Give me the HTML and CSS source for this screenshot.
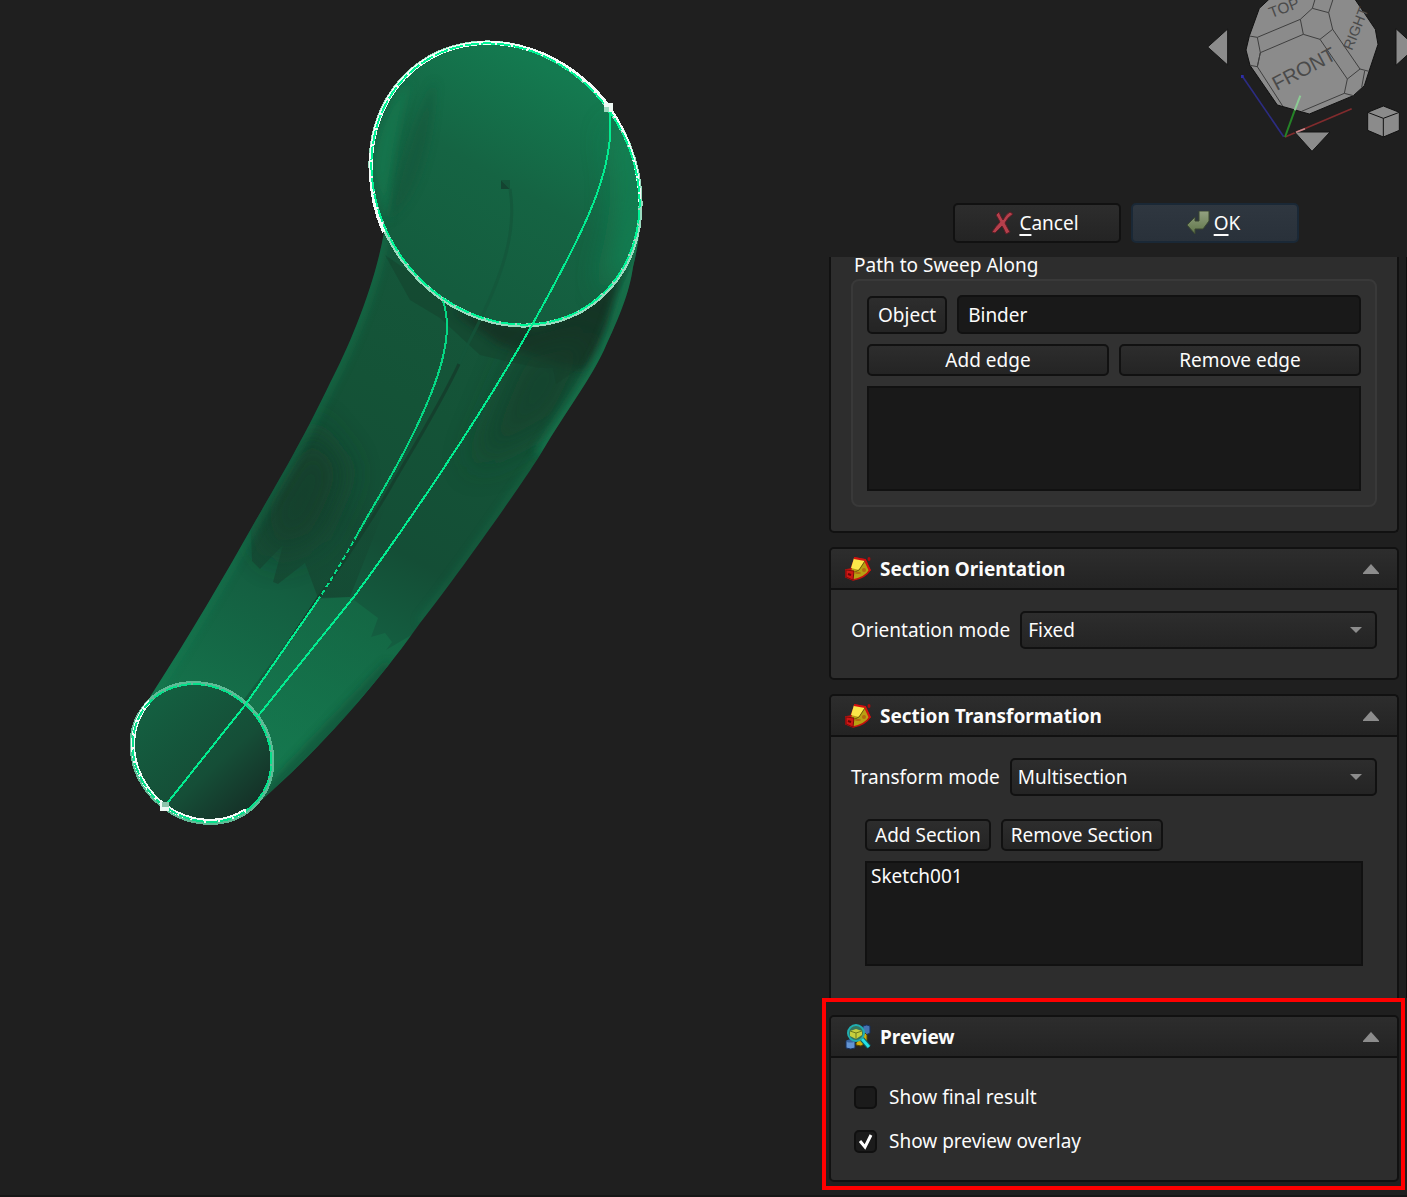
FILE: index.html
```html
<!DOCTYPE html>
<html lang="en">
<head>
    <meta charset="UTF-8">
    <meta name="viewport" content="width=device-width, initial-scale=1.0">
    <title>Sweep</title>
    <link rel="stylesheet" href="styles.css">
</head>
<body>
    <main class="workspace">
        <section class="viewport">
            <svg class="model" width="822" height="860" viewBox="0 0 822 860" role="img" aria-label="Swept pipe">
                <defs>
                    <clipPath id="tube-clip">
                        <path d="M384 232C375 285 350 345 330 383C305 435 285 470 256 520C225 575 190 635 150 697L165 760L258 803C320 750 380 680 420 623C445 592 515 495 540 455C570 405 590 380 604 350C620 315 629 294 633 267Q641 235 641 205Q560 120 384 232Z"/>
                    </clipPath>
                    <clipPath id="big-clip">
                        <ellipse cx="505.5" cy="184" rx="148" ry="128" transform="rotate(54.5 505.5 184)"/>
                    </clipPath>
                    <clipPath id="small-clip">
                        <ellipse cx="202" cy="753" rx="74" ry="66" transform="rotate(43.3 202 753)"/>
                    </clipPath>
                    <linearGradient id="tube" gradientUnits="userSpaceOnUse" x1="500" y1="260" x2="240" y2="750">
                        <stop offset="0" stop-color="#15573b"/>
                        <stop offset=".3" stop-color="#145337"/>
                        <stop offset=".55" stop-color="#144e36"/>
                        <stop offset=".72" stop-color="#145f41"/>
                        <stop offset="1" stop-color="#15744c"/>
                    </linearGradient>
                    <linearGradient id="mouth" gradientUnits="userSpaceOnUse" x1="570" y1="80" x2="450" y2="290">
                        <stop offset="0" stop-color="#147a50"/>
                        <stop offset=".5" stop-color="#156443"/>
                        <stop offset="1" stop-color="#145c3e"/>
                    </linearGradient>
                    <linearGradient id="end" gradientUnits="userSpaceOnUse" x1="150" y1="710" x2="245" y2="815">
                        <stop offset="0" stop-color="#145e40"/>
                        <stop offset=".6" stop-color="#154e37"/>
                        <stop offset="1" stop-color="#153027"/>
                    </linearGradient>
                    <linearGradient id="facets" gradientUnits="userSpaceOnUse" x1="290" y1="580" x2="330" y2="480">
                        <stop offset="0" stop-color="#15402d"/>
                        <stop offset="1" stop-color="#15402d" stop-opacity="0"/>
                    </linearGradient>
                    <linearGradient id="lit" gradientUnits="userSpaceOnUse" x1="360" y1="610" x2="300" y2="740">
                        <stop offset="0" stop-color="#147048"/>
                        <stop offset="1" stop-color="#15794f"/>
                    </linearGradient>
                    <filter id="soft" x="-50%" y="-50%" width="200%" height="200%">
                        <feGaussianBlur stdDeviation="16"/>
                    </filter>
                    <filter id="edge" x="-50%" y="-50%" width="200%" height="200%">
                        <feGaussianBlur stdDeviation="5"/>
                    </filter>
                </defs>

                <!-- outer skin of the sweep -->
                <g clip-path="url(#tube-clip)">
                    <path d="M100 100H700V850H100Z" fill="url(#tube)"/>
                    <path d="M450 310L540 328L620 280L610 330L585 370L560 365L500 345Z" fill="#152f23" filter="url(#edge)"/>
                    <path d="M520 350L600 330L560 420L470 470Z" fill="#153e2b" opacity=".7" filter="url(#soft)"/>
                    <path d="M385 255L410 300L440 318L480 355L510 362L540 368L553 368L556 384L582 366L640 250L540 320L450 300Z" fill="#153e2b" opacity=".45"/>
                    <path d="M256 510L310 420L350 470L320 540L270 560Z" fill="#153e2b" opacity=".8" filter="url(#soft)"/>
                    <path d="M251 536L252 561L260 569L283 545L273 582L278 584L305 563L318 598L350 597L400 470L310 420L250 520Z" fill="url(#facets)" opacity=".6"/>
                    <path d="M318 599L350 597L378 618L371 637L385 633L392 642L386 650L420 630L380 680L330 730L250 810L250 700Z" fill="url(#lit)" opacity=".6"/>
                    <path d="M384 232C375 285 350 345 330 383C305 435 285 470 256 520C225 575 190 635 150 697" fill="none" stroke="#178457" stroke-width="8" opacity=".5" filter="url(#edge)"/>
                    <path d="M641 225L633 267L604 350C590 380 570 405 540 455" fill="none" stroke="#168256" stroke-width="12" opacity=".7" filter="url(#edge)"/>
                    <path d="M540 455C515 495 445 592 420 623" fill="none" stroke="#168256" stroke-width="6" opacity=".4" filter="url(#edge)"/>
                    <path d="M390 665L290 770L262 800" fill="none" stroke="#144b34" stroke-width="9" opacity=".8" filter="url(#edge)"/>
                </g>
                <path d="M459 364C440 405 410 453 390 488S330 582 318 598L290 640" fill="none" stroke="#14402d" stroke-width="3"/>
                <path d="M290 640L244 702" fill="none" stroke="#145a3d" stroke-width="3"/>

                <!-- open end with the larger profile -->
                <g clip-path="url(#big-clip)">
                    <path d="M360 30H650V335H360Z" fill="url(#mouth)"/>
                    <path d="M640 130L650 270L600 290Q635 200 610 130Z" fill="#148a59" opacity=".8" filter="url(#soft)"/>
                    <path d="M410 80Q375 120 372 170L387 225Q392 150 410 80Z" fill="#158052" opacity=".6" filter="url(#edge)"/>
                    <path d="M435 80Q407 135 388 220Q430 190 435 80Z" fill="#14543a" opacity=".5" filter="url(#edge)"/>
                </g>
                <path d="M501 180L510 189L501 189Z" fill="#144431"/>
                <path d="M501 180H510V189Z" fill="#14553a"/>
                <path d="M510 189C517 230 504 275 470 340L459 364" fill="none" stroke="#14553b" stroke-width="3" opacity=".7"/>

                <!-- closed end with the smaller profile -->
                <g clip-path="url(#small-clip)">
                    <path d="M120 670H290V830H120Z" fill="url(#end)"/>
                </g>

                <g fill="none" shape-rendering="crispEdges">
                    <ellipse cx="505.5" cy="184" rx="148" ry="128" transform="rotate(54.5 505.5 184)" stroke="#9adbbf" stroke-width="4"/>
                    <path d="M609 107A148 128 54.5 0 0 487 43A148 128 54.5 0 0 371 165A148 128 54.5 0 0 384 232" stroke="#f4fbf8" stroke-width="4"/>
                    <path d="M609 107Q638 148 640 202" stroke="#f4fbf8" stroke-width="3"/>
                    <ellipse cx="505.5" cy="184" rx="147" ry="127" transform="rotate(54.5 505.5 184)" stroke="#00f596" stroke-width="2" stroke-dasharray="14 2"/>
                    <ellipse cx="202" cy="753" rx="74" ry="66" transform="rotate(43.3 202 753)" stroke="#5fbb96" stroke-width="4"/>
                    <path d="M150 701A74 66 43.3 0 0 165 806A74 66 43.3 0 0 246 810" stroke="#f4fbf8" stroke-width="4"/>
                    <ellipse cx="202" cy="753" rx="73" ry="65" transform="rotate(43.3 202 753)" stroke="#06e08b" stroke-width="2" stroke-dasharray="12 2"/>
                    <path d="M609 109C618 165 584 232 532 325S400 535 353 598L258 716" stroke="#02ec90" stroke-width="2"/>
                    <path d="M443 301C455 335 438 382 415 430S372 507 357 535" stroke="#05d884" stroke-width="2"/>
                    <path d="M357 535Q340 566 318 600" stroke="#05d884" stroke-width="2" stroke-dasharray="5 3"/>
                    <path d="M318 600L246 704L165 806" stroke="#02ec90" stroke-width="2"/>
                </g>
                <path d="M604 103H613V112H604Z" fill="#eef8f4"/>
                <path d="M604 107H609V112H604Z" fill="#9fd9c0"/>
                <path d="M160 802H169V811H160Z" fill="#eef8f4"/>
                <path d="M162 802H169V807H162Z" fill="#8fc4ac"/>
            </svg>
        </section>

        <aside class="task-panel">
            <div class="navigation">
                <svg class="nav-cube" viewBox="0 0 651 495" role="img" aria-label="Navigation cube">
                    <g fill="#8b8b8b" stroke="#151515" stroke-width="3">
                        <path d="M53 141L113 87V195Z"/>
                        <path d="M618 86L678 141L618 196Z"/>
                    </g>
                    <path d="M240 -5L208 25L178 108L168 150L180 196L262 315L358 342L490 287L523 257L537 214L564 133L556 88L493 -5Z" fill="#8b8b8b" stroke="#111" stroke-width="3"/>
                    <g fill="none" stroke="#3f3f3f" stroke-width="3">
                        <path d="M178 108L202 112L331 58L367 25L376 -5M202 112L211 158L202 200L180 196M211 158L340 103L331 58M340 103L390 118L428 88L416 38L367 25M416 38L430 -5M428 88L510 207L537 214M390 118L472 237L510 207M472 237L463 280L490 287M463 280L335 334M202 200L278 318M211 158L202 200M524 213L515 262"/>
                    </g>
                    <g class="cube-text">
                        <text x="260" y="273" font-size="60" transform="rotate(-28 260 273)">FRONT</text>
                        <text x="244" y="55" font-size="46" transform="rotate(-21 244 55)">TOP</text>
                        <text x="486" y="153" font-size="43" transform="rotate(-68 486 153)">RIGHT</text>
                    </g>
                    <g fill="none" stroke-width="5">
                        <path d="M157 229L281 410" stroke="#2c2c82"/>
                        <path d="M285 411L485 326" stroke="#812b2d"/>
                    </g>
                    <path d="M153 225H161V234H153Z" fill="#2e2ea8"/>
                    <path d="M314 396H420L366 454Z" fill="#8b8b8b" stroke="#151515" stroke-width="3"/>
                    <path d="M318 397L345 386" stroke="#c98a8c" stroke-width="5"/>
                    <path d="M285 411L314 331" stroke="#258327" stroke-width="6"/>
                    <path d="M314 331L331 287" stroke="#8ccb94" stroke-width="6"/>
                    <path d="M533 337L580 318L628 337V391L580 411L533 391Z" fill="#8b8b8b" stroke="#111" stroke-width="3"/>
                    <path d="M533 337L580 355L628 337M580 355V411" fill="none" stroke="#111" stroke-width="3"/>
                </svg>
            </div>

            <div class="dialog-buttons">
                <button type="button" class="btn dialog-btn">
                    <svg class="dialog-icon" viewBox="0 0 24 24" aria-hidden="true">
                        <path d="M8 1Q10 6 12 9Q15 3 19 1L22 3Q16 7 14 12Q17 18 19 21L15 23Q13 18 11 15Q8 18 4 22L1 21Q5 15 9 11Q7 7 5 4Z" fill="#b5404c" stroke="#5d1d25" stroke-width="1"/>
                    </svg>
                    <span><u>C</u>ancel</span>
                </button>
                <button type="button" class="btn dialog-btn dialog-btn-ok">
                    <svg class="dialog-icon" viewBox="0 0 24 24" aria-hidden="true">
                        <defs>
                            <linearGradient id="ok-arrow" x1="0" y1="0" x2="0" y2="1">
                                <stop offset="0" stop-color="#93a181"/>
                                <stop offset="1" stop-color="#5f7548"/>
                            </linearGradient>
                        </defs>
                        <path d="M13 0H23V10L17 18H9V23L1 14L9 6V10H13Z" fill="url(#ok-arrow)" stroke="#3a4731" stroke-width="1"/>
                    </svg>
                    <span><u>O</u>K</span>
                </button>
            </div>

            <div class="task-list">
                <section class="card card-path">
                    <h2 class="group-title" id="path-title">Path to Sweep Along</h2>
                    <div class="group" role="group" aria-labelledby="path-title">
                        <div class="row">
                            <button type="button" class="btn btn-object">Object</button>
                            <input type="text" class="text-input" aria-label="Path object" value="Binder">
                        </div>
                        <div class="row">
                            <button type="button" class="btn btn-wide">Add edge</button>
                            <button type="button" class="btn btn-wide">Remove edge</button>
                        </div>
                        <ul class="list-box" aria-label="Edges"></ul>
                    </div>
                </section>

                <section class="card">
                    <header class="card-header">
                        <svg class="card-icon" viewBox="0 0 26 26" aria-hidden="true">
                            <path d="M10 2L20 4L25 14Q20 22 8 24L1 21L1 14L6 13Z" fill="#b8a012" stroke="#c4120f" stroke-width="1.6"/>
                            <path d="M9 2L20 4L14 14L6 12Z" fill="#fbe64a"/>
                            <path d="M9 2L20 4L25 15" fill="none" stroke="#d21210" stroke-width="2"/>
                            <path d="M20 5L14 14L10 16" fill="none" stroke="#6e5a0b" stroke-width="1"/>
                            <path d="M1 14L9 15L8 24L1 21Z" fill="#cf1714" stroke="#7f0a0a" stroke-width="1"/>
                            <path d="M3 18L6 19" stroke="#640606" stroke-width="2"/>
                            <ellipse cx="13" cy="17" rx="3" ry="1" fill="#b56a10"/>
                            <ellipse cx="19" cy="14" rx="2" ry="2" fill="#b56a10"/>
                            <ellipse cx="24" cy="3" rx="1.5" ry="2" fill="#a80d10"/>
                        </svg>
                        <h2 class="card-title">Section Orientation</h2>
                        <svg class="collapse" viewBox="0 0 16 10" aria-hidden="true"><path d="M8 0L16 9V10H0V9Z"/></svg>
                    </header>
                    <div class="card-body">
                        <div class="row">
                            <label for="orientation">Orientation mode</label>
                            <span class="select">
                                <select id="orientation"><option>Fixed</option></select>
                            </span>
                        </div>
                    </div>
                </section>

                <section class="card card-transform">
                    <header class="card-header">
                        <svg class="card-icon" viewBox="0 0 26 26" aria-hidden="true">
                            <path d="M10 2L20 4L25 14Q20 22 8 24L1 21L1 14L6 13Z" fill="#b8a012" stroke="#c4120f" stroke-width="1.6"/>
                            <path d="M9 2L20 4L14 14L6 12Z" fill="#fbe64a"/>
                            <path d="M9 2L20 4L25 15" fill="none" stroke="#d21210" stroke-width="2"/>
                            <path d="M20 5L14 14L10 16" fill="none" stroke="#6e5a0b" stroke-width="1"/>
                            <path d="M1 14L9 15L8 24L1 21Z" fill="#cf1714" stroke="#7f0a0a" stroke-width="1"/>
                            <path d="M3 18L6 19" stroke="#640606" stroke-width="2"/>
                            <ellipse cx="13" cy="17" rx="3" ry="1" fill="#b56a10"/>
                            <ellipse cx="19" cy="14" rx="2" ry="2" fill="#b56a10"/>
                            <ellipse cx="24" cy="3" rx="1.5" ry="2" fill="#a80d10"/>
                        </svg>
                        <h2 class="card-title">Section Transformation</h2>
                        <svg class="collapse" viewBox="0 0 16 10" aria-hidden="true"><path d="M8 0L16 9V10H0V9Z"/></svg>
                    </header>
                    <div class="card-body">
                        <div class="row">
                            <label for="transform">Transform mode</label>
                            <span class="select">
                                <select id="transform"><option>Multisection</option></select>
                            </span>
                        </div>
                        <div class="sections">
                            <div class="row">
                                <button type="button" class="btn">Add Section</button>
                                <button type="button" class="btn">Remove Section</button>
                            </div>
                            <ul class="list-box" aria-label="Sections">
                                <li>Sketch001</li>
                            </ul>
                        </div>
                    </div>
                </section>
            </div>

            <div class="highlight">
                <section class="card">
                    <header class="card-header">
                        <svg class="card-icon" viewBox="0 0 26 26" aria-hidden="true">
                            <path d="M18 2Q22 0 25 2V9Q22 12 17 10Z" fill="#4773b2" stroke="#152f5c" stroke-width="1"/>
                            <path d="M1 17Q5 14 10 17V24Q6 26 1 24Z" fill="#6394d2" stroke="#152f5c" stroke-width="1"/>
                            <ellipse cx="5.500" cy="17" rx="4" ry="1.500" fill="#3c66a0"/>
                            <path d="M11 19L20 9L22 11V18L16 22L11 21Z" fill="#d1ae0b" stroke="#554600" stroke-width="1"/>
                            <circle cx="11" cy="9" r="8" fill="#35745f" stroke="#20aeb0" stroke-width="2"/>
                            <path d="M5 7L11 5L17 7V11L11 15L5 12Z" fill="#c7cf3d"/>
                            <path d="M5 7L11 9L17 7M11 9V15" fill="none" stroke="#6c7a1d" stroke-width="1"/>
                            <path d="M17 15L24 23" stroke="#0d5d62" stroke-width="5"/>
                            <path d="M17 15L24 23" stroke="#25e0e4" stroke-width="3"/>
                        </svg>
                        <h2 class="card-title">Preview</h2>
                        <svg class="collapse" viewBox="0 0 16 10" aria-hidden="true"><path d="M8 0L16 9V10H0V9Z"/></svg>
                    </header>
                    <div class="card-body checks">
                        <label class="check"><input type="checkbox"> Show final result</label>
                        <label class="check"><input type="checkbox" checked> Show preview overlay</label>
                    </div>
                </section>
            </div>
        </aside>
    </main>
</body>
</html>
```
FILE: styles.css
```css
* {
    box-sizing: border-box;
}

body {
    margin: 0;
    font-family: "Noto Sans", sans-serif;
    font-size: 19px;
    line-height: 26px;
    background: #1f1f1f;
    color: #fcfcfc;
}

h2,
ul {
    margin: 0;
    padding: 0;
    list-style: none;
}

.workspace {
    display: grid;
    grid-template-columns: minmax(0, 1fr) 585px;
    min-height: 100vh;
    border-bottom: 2px solid #161616;
}

.viewport {
    overflow: hidden;
}

.model {
    display: block;
    max-width: 100%;
}

.task-panel {
    display: flex;
    flex-direction: column;
}

/* Navigation cube */
.navigation {
    display: flex;
    justify-content: flex-end;
    height: 203px;
}

.nav-cube {
    width: 217px;
    height: 165px;
}

.cube-text {
    font-family: "Liberation Sans", sans-serif;
    fill: #4a4a4a;
}

/* Buttons */
.btn {
    height: 32px;
    padding: 0 8px;
    border: 2px solid #111;
    border-radius: 5px;
    background: linear-gradient(#2d2d2d, #242424);
    color: #fcfcfc;
    font: inherit;
    line-height: 26px;
}

.btn-object {
    height: 38px;
    padding: 0 9px;
}

.btn-wide {
    flex: 1;
}

.dialog-buttons {
    display: flex;
    justify-content: flex-end;
    gap: 10px;
    padding-right: 108px;
    margin-bottom: 14px;
}

.dialog-btn {
    display: flex;
    align-items: center;
    justify-content: center;
    gap: 4px;
    width: 168px;
    height: 40px;
    padding: 0 12px 0 8px;
}

.dialog-btn-ok {
    border-color: #1a2836;
    background: linear-gradient(#2f3740, #29313a);
}

.dialog-btn u {
    text-underline-offset: 4px;
    text-decoration-thickness: 2px;
    text-decoration-skip-ink: none;
}

.dialog-icon {
    width: 24px;
    height: 24px;
}

/* Task cards */
.task-list {
    display: flex;
    flex-direction: column;
    gap: 14px;
    padding: 0 7px;
    border-right: 1px solid #0c0c0c;
}

.card {
    border: 2px solid #111;
    border-radius: 5px;
    background: #2d2d2d;
}

.card-path {
    padding: 0 20px 24px;
    border-top: 0;
    border-radius: 0 0 5px 5px;
}

.card-transform {
    border-bottom: 0;
    border-radius: 5px 5px 0 0;
}

.card-header {
    display: flex;
    align-items: center;
    gap: 9px;
    height: 41px;
    padding: 0 18px 0 14px;
    border-bottom: 2px solid #111;
    border-radius: 4px 4px 0 0;
    background: linear-gradient(#2d2d2d, #232323);
}

.card-icon {
    width: 26px;
    height: 26px;
}

.card-title {
    flex: 1;
    font-size: 19px;
}

.collapse {
    width: 16px;
    height: 10px;
    fill: #8c8c8c;
}

.card-body {
    padding: 21px 20px 29px;
}

.row {
    display: flex;
    align-items: center;
    gap: 10px;
}

.group-title {
    height: 22px;
    padding-left: 3px;
    font-size: 19px;
    font-weight: 400;
    line-height: 16px;
}

.group {
    display: flex;
    flex-direction: column;
    gap: 10px;
    padding: 14px;
    border: 2px solid #393939;
    border-radius: 8px;
    background: #313131;
}

.text-input {
    flex: 1;
    min-width: 0;
    height: 39px;
    padding: 0 9px;
    border: 2px solid #111;
    border-radius: 5px;
    background: #191919;
    color: #fcfcfc;
    font: inherit;
}

.list-box {
    height: 105px;
    padding: 0 4px;
    border: 2px solid #111;
    background: #191919;
}

.select {
    position: relative;
    display: flex;
    flex: 1;
}

.select::after {
    content: "";
    position: absolute;
    top: 16px;
    right: 15px;
    border: 6px solid transparent;
    border-top-color: #8c8c8c;
    border-bottom: 0;
    pointer-events: none;
}

.select select {
    appearance: none;
    width: 100%;
    height: 38px;
    padding: 0 6px;
    border: 2px solid #111;
    border-radius: 5px;
    background: linear-gradient(#2d2d2d, #242424);
    color: #fcfcfc;
    font: inherit;
}

.sections {
    display: flex;
    flex-direction: column;
    gap: 10px;
    padding: 23px 14px 3px;
}

/* Preview section */
.highlight {
    padding: 13px 2px 4px 3px;
    border: 4px solid #f00;
    margin-right: 2px;
}

.checks {
    display: flex;
    flex-direction: column;
    gap: 18px;
    padding: 26px 23px;
}

.check {
    display: flex;
    align-items: center;
    gap: 12px;
}

.check input {
    appearance: none;
    width: 23px;
    height: 23px;
    margin: 0;
    border: 2px solid #101010;
    border-radius: 5px;
    background: #1b1b1b;
}

.check input:checked {
    background: #1b1b1b url("data:image/svg+xml,%3Csvg xmlns='http://www.w3.org/2000/svg' viewBox='0 0 19 19'%3E%3Cpath d='M4 9L9 15L15 3' fill='none' stroke='white' stroke-width='3'/%3E%3C/svg%3E") center / 19px 19px;
}
```
